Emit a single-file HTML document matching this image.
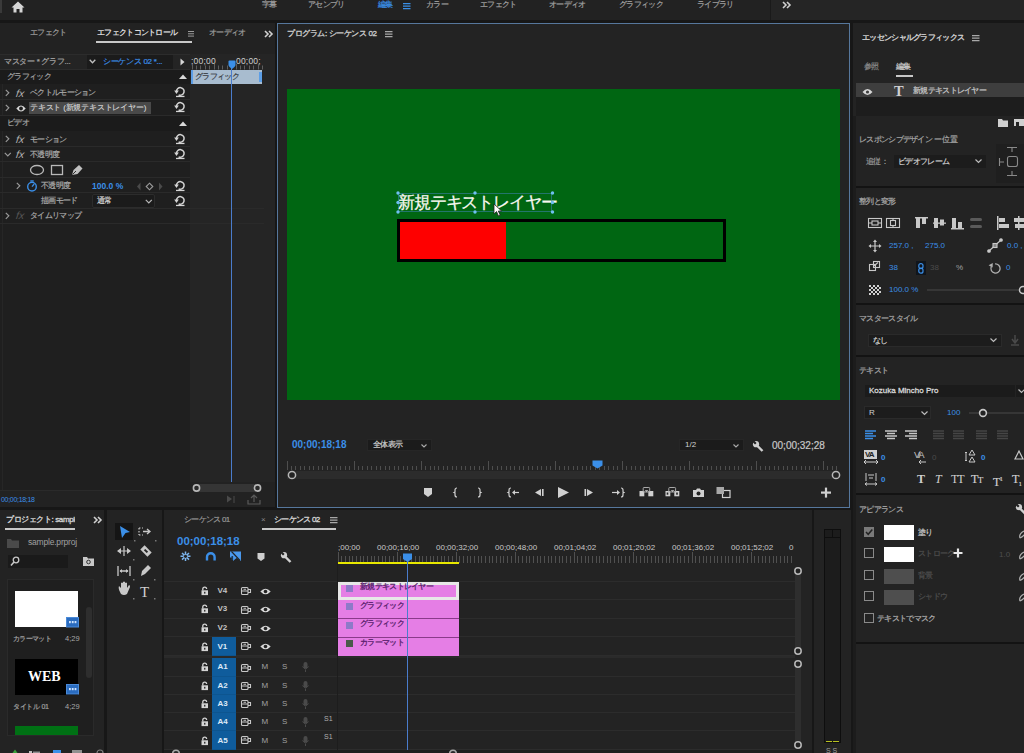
<!DOCTYPE html>
<html><head><meta charset="utf-8">
<style>
html,body{margin:0;padding:0}
body{width:1024px;height:753px;overflow:hidden;position:relative;background:#171717;font-family:"Liberation Sans",sans-serif;color:#b4b4b4;font-size:8px}
.a{position:absolute}
.t{position:absolute;white-space:nowrap;line-height:10px;height:10px;letter-spacing:-0.7px;-webkit-text-stroke:0.2px currentColor}
.n{letter-spacing:0;-webkit-text-stroke:0}
.bl{color:#3b8fe8}
svg{position:absolute;overflow:visible}
</style></head><body>
<!-- HEADER -->
<div class="a" style="left:0;top:0;width:1024px;height:20px;background:#222"></div>
<div class="a" style="left:0;top:0;width:2px;height:13px;background:#3a3a3a"></div>
<svg style="left:11px;top:1px" width="14" height="12" viewBox="0 0 14 12"><path d="M7 0.5 L13.5 6.5 L11.5 6.5 L11.5 11.5 L8.5 11.5 L8.5 8 L5.5 8 L5.5 11.5 L2.5 11.5 L2.5 6.5 L0.5 6.5 Z" fill="#d6d6d6"/></svg>
<div class="t" style="left:262px;top:0;color:#a0a0a0">字幕</div>
<div class="t" style="left:308px;top:0;color:#a0a0a0">アセンブリ</div>
<div class="t" style="left:378px;top:0;color:#3a8fe6">編集</div>
<svg style="left:403px;top:3px" width="8" height="7"><path d="M0 0.6H7.5M0 3.1H7.5M0 5.6H7.5" stroke="#3a8fe6" stroke-width="1.1"/></svg>
<div class="t" style="left:426px;top:0;color:#a0a0a0">カラー</div>
<div class="t" style="left:480px;top:0;color:#a0a0a0">エフェクト</div>
<div class="t" style="left:549px;top:0;color:#a0a0a0">オーディオ</div>
<div class="t" style="left:619px;top:0;color:#a0a0a0">グラフィック</div>
<div class="t" style="left:697px;top:0;color:#a0a0a0">ライブラリ</div>
<div class="a" style="left:771px;top:0;width:253px;height:20px;background:#252525"></div>
<div class="a" style="left:770px;top:0;width:1px;height:20px;background:#1a1a1a"></div>
<svg style="left:782px;top:1px" width="9" height="8"><path d="M1 1 L4 4 L1 7 M5 1 L8 4 L5 7" fill="none" stroke="#d0d0d0" stroke-width="1.6"/></svg>
<!-- LEFT PANEL: effect controls -->
<div class="a" style="left:0;top:23px;width:275px;height:484px;background:#222"></div>
<div class="t" style="left:30px;top:28px;color:#9c9c9c">エフェクト</div>
<div class="t" style="left:97px;top:28px;color:#dcdcdc;font-weight:bold;-webkit-text-stroke:0">エフェクトコントロール</div>
<svg style="left:188px;top:30.5px" width="7" height="7"><path d="M0 0.5H6M0 2.8H6M0 5.1H6" stroke="#9a9a9a" stroke-width="1"/></svg>
<div class="t" style="left:209px;top:28px;color:#9c9c9c">オーディオ</div>
<svg style="left:264px;top:30px" width="9" height="8"><path d="M1 1 L4 4 L1 7 M5 1 L8 4 L5 7" fill="none" stroke="#d0d0d0" stroke-width="1.6"/></svg>
<div class="a" style="left:96px;top:41px;width:96px;height:2px;background:#c8c8c8"></div>
<!-- effect list bg -->
<div class="a" style="left:0;top:54px;width:190px;height:436px;background:#1f1f1f"></div>
<div class="a" style="left:0;top:490px;width:190px;height:1px;background:#2a2a2a"></div>
<div class="a" style="left:2px;top:54px;width:1px;height:436px;background:#262626"></div>
<div class="a" style="left:190px;top:54px;width:85px;height:428px;background:#252525"></div>
<!-- master row -->
<div class="a" style="left:0;top:54px;width:190px;height:1px;background:#2c2c2c"></div>
<div class="a" style="left:0;top:55px;width:190px;height:14px;background:#242424"></div>
<div class="t" style="left:4px;top:57px;color:#a4a4a4;letter-spacing:-0.3px">マスター * グラフ...</div>
<div class="a" style="left:87px;top:55px;width:86px;height:14px;background:#1b1b1b"></div>
<svg style="left:89px;top:59px" width="7" height="5"><path d="M0.7 0.7 L3.5 3.7 L6.3 0.7" fill="none" stroke="#c0c0c0" stroke-width="1.3"/></svg>
<div class="t" style="left:103px;top:57px;color:#3b8fe8;letter-spacing:-0.3px">シーケンス 02 *...</div>
<svg style="left:180px;top:58px" width="6" height="8"><path d="M0.5 0.5 L4.5 4 L0.5 7.5Z" fill="#d8d8d8"/></svg>
<div class="a" style="left:0;top:69px;width:190px;height:1px;background:#2c2c2c"></div>
<!-- section rows -->
<div class="a" style="left:0;top:70px;width:190px;height:14px;background:#1b1b1b"></div>
<div class="t" style="left:7px;top:72px;color:#a0a0a0">グラフィック</div>
<svg style="left:179px;top:74px" width="8" height="5"><path d="M0 5 L4 0.5 L8 5Z" fill="#d8d8d8"/></svg>
<div class="a" style="left:0;top:116px;width:190px;height:15px;background:#1b1b1b"></div>
<div class="t" style="left:7px;top:118px;color:#a0a0a0">ビデオ</div>
<svg style="left:179px;top:121px" width="8" height="5"><path d="M0 5 L4 0.5 L8 5Z" fill="#d8d8d8"/></svg>
<div class="a" style="left:0;top:99px;width:190px;height:1px;background:#2a2a2a"></div>
<div class="a" style="left:0;top:115px;width:190px;height:1px;background:#2a2a2a"></div>
<div class="a" style="left:0;top:146px;width:190px;height:1px;background:#2a2a2a"></div>
<div class="a" style="left:0;top:161px;width:190px;height:1px;background:#2a2a2a"></div>
<div class="a" style="left:0;top:177px;width:190px;height:1px;background:#2a2a2a"></div>
<div class="a" style="left:0;top:192px;width:190px;height:1px;background:#2a2a2a"></div>
<div class="a" style="left:0;top:208px;width:264px;height:1px;background:#2a2a2a"></div>
<div class="a" style="left:0;top:223px;width:264px;height:1px;background:#2a2a2a"></div>
<svg style="left:5px;top:89px" width="5" height="8"><path d="M0.8 0.8 L3.8 3.8 L0.8 6.8" fill="none" stroke="#9a9a9a" stroke-width="1.2"/></svg>
<div class="t n" style="left:16px;top:88px;height:11px;line-height:11px;color:#b0b0b0;font-style:italic;font-size:10.5px;transform:skewX(-8deg)">fx</div>
<div class="t" style="left:30px;top:88px;color:#a8a8a8">ベクトルモーション</div>
<svg style="left:5px;top:104px" width="5" height="8"><path d="M0.8 0.8 L3.8 3.8 L0.8 6.8" fill="none" stroke="#9a9a9a" stroke-width="1.2"/></svg>
<svg style="left:16px;top:104px" width="10" height="9"><path d="M0.3 4.5 Q5 -1.5 9.7 4.5 Q5 10.5 0.3 4.5Z" fill="#d8d8d8"/><circle cx="5" cy="4.5" r="1.9" fill="#1f1f1f"/></svg>
<div class="a" style="left:29px;top:102px;width:122px;height:12px;background:#494949"></div>
<div class="t" style="left:30px;top:103px;color:#d8d8d8;letter-spacing:-0.2px;-webkit-text-stroke:0.1px #d8d8d8">テキスト (新規テキストレイヤー)</div>
<svg style="left:5px;top:135px" width="5" height="8"><path d="M0.8 0.8 L3.8 3.8 L0.8 6.8" fill="none" stroke="#9a9a9a" stroke-width="1.2"/></svg>
<div class="t n" style="left:16px;top:134px;height:11px;line-height:11px;color:#b0b0b0;font-style:italic;font-size:10.5px;transform:skewX(-8deg)">fx</div>
<div class="t" style="left:30px;top:135px;color:#a8a8a8">モーション</div>
<svg style="left:4px;top:152px" width="8" height="5"><path d="M0.8 0.8 L3.8 3.8 L6.8 0.8" fill="none" stroke="#9a9a9a" stroke-width="1.2"/></svg>
<div class="t n" style="left:16px;top:149px;height:11px;line-height:11px;color:#b0b0b0;font-style:italic;font-size:10.5px;transform:skewX(-8deg)">fx</div>
<div class="t" style="left:30px;top:150px;color:#a8a8a8">不透明度</div>
<svg style="left:29px;top:164px" width="56" height="12"><ellipse cx="8" cy="6" rx="6.5" ry="4.5" fill="none" stroke="#b8b8b8" stroke-width="1.3"/><rect x="22.5" y="1.5" width="11" height="9" fill="none" stroke="#b8b8b8" stroke-width="1.3"/><path d="M43 11 L44.5 6 L50 1 L53.5 4.5 L48.5 10 Z" fill="#c0c0c0"/><path d="M43.5 10.5 L47 7" stroke="#1f1f1f" stroke-width="0.9"/></svg>
<svg style="left:16px;top:182px" width="5" height="8"><path d="M0.8 0.8 L3.8 3.8 L0.8 6.8" fill="none" stroke="#9a9a9a" stroke-width="1.2"/></svg>
<svg style="left:26px;top:180px" width="12" height="12"><circle cx="6" cy="6.7" r="4.3" fill="none" stroke="#3b8fe8" stroke-width="1.4"/><path d="M6 6.7 L8.2 4" stroke="#3b8fe8" stroke-width="1.3"/><rect x="4.3" y="0.3" width="3.4" height="1.4" fill="#3b8fe8"/></svg>
<div class="t" style="left:41px;top:181px;color:#a8a8a8">不透明度</div>
<div class="t n bl" style="left:92px;top:181px;font-weight:bold;font-size:8.5px">100.0 %</div>
<svg style="left:136px;top:182px" width="28" height="9"><path d="M4.5 0.5 L1 4.5 L4.5 8.5Z" fill="#4a4a4a"/><path d="M13.5 1.2 L16.8 4.5 L13.5 7.8 L10.2 4.5Z" fill="none" stroke="#9a9a9a" stroke-width="1.1"/><path d="M23 0.5 L26.5 4.5 L23 8.5Z" fill="#4a4a4a"/></svg>
<div class="t" style="left:41px;top:196px;color:#a8a8a8">描画モード</div>
<div class="a" style="left:92px;top:194px;width:63px;height:14px;background:#1b1b1b;box-sizing:border-box;border:1px solid #2c2c2c;border-radius:2px"></div>
<div class="t" style="left:97px;top:196px;color:#d0d0d0">通常</div>
<svg style="left:145px;top:199px" width="8" height="5"><path d="M0.8 0.8 L3.8 3.8 L6.8 0.8" fill="none" stroke="#b8b8b8" stroke-width="1.2"/></svg>
<svg style="left:5px;top:212px" width="5" height="8"><path d="M0.8 0.8 L3.8 3.8 L0.8 6.8" fill="none" stroke="#9a9a9a" stroke-width="1.2"/></svg>
<div class="t n" style="left:16px;top:210px;height:11px;line-height:11px;color:#555;font-style:italic;font-size:10.5px;transform:skewX(-8deg)">fx</div>
<div class="t" style="left:30px;top:211px;color:#a8a8a8">タイムリマップ</div>
<svg style="left:174px;top:84.5px" width="13" height="13" viewBox="0 0 13 13"><path d="M2.5 6.4 A3.8 3.8 0 1 1 4.6 9.8" fill="none" stroke="#d4d4d4" stroke-width="1.5"/><path d="M0.2 5.6 L4.8 5.6 L2.5 8.9Z" fill="#d4d4d4"/><rect x="2" y="10.8" width="8.5" height="1.3" fill="#d4d4d4"/></svg>
<svg style="left:174px;top:100.0px" width="13" height="13" viewBox="0 0 13 13"><path d="M2.5 6.4 A3.8 3.8 0 1 1 4.6 9.8" fill="none" stroke="#d4d4d4" stroke-width="1.5"/><path d="M0.2 5.6 L4.8 5.6 L2.5 8.9Z" fill="#d4d4d4"/><rect x="2" y="10.8" width="8.5" height="1.3" fill="#d4d4d4"/></svg>
<svg style="left:174px;top:131.5px" width="13" height="13" viewBox="0 0 13 13"><path d="M2.5 6.4 A3.8 3.8 0 1 1 4.6 9.8" fill="none" stroke="#d4d4d4" stroke-width="1.5"/><path d="M0.2 5.6 L4.8 5.6 L2.5 8.9Z" fill="#d4d4d4"/><rect x="2" y="10.8" width="8.5" height="1.3" fill="#d4d4d4"/></svg>
<svg style="left:174px;top:147.0px" width="13" height="13" viewBox="0 0 13 13"><path d="M2.5 6.4 A3.8 3.8 0 1 1 4.6 9.8" fill="none" stroke="#d4d4d4" stroke-width="1.5"/><path d="M0.2 5.6 L4.8 5.6 L2.5 8.9Z" fill="#d4d4d4"/><rect x="2" y="10.8" width="8.5" height="1.3" fill="#d4d4d4"/></svg>
<svg style="left:174px;top:179.0px" width="13" height="13" viewBox="0 0 13 13"><path d="M2.5 6.4 A3.8 3.8 0 1 1 4.6 9.8" fill="none" stroke="#d4d4d4" stroke-width="1.5"/><path d="M0.2 5.6 L4.8 5.6 L2.5 8.9Z" fill="#d4d4d4"/><rect x="2" y="10.8" width="8.5" height="1.3" fill="#d4d4d4"/></svg>
<svg style="left:174px;top:194.0px" width="13" height="13" viewBox="0 0 13 13"><path d="M2.5 6.4 A3.8 3.8 0 1 1 4.6 9.8" fill="none" stroke="#d4d4d4" stroke-width="1.5"/><path d="M0.2 5.6 L4.8 5.6 L2.5 8.9Z" fill="#d4d4d4"/><rect x="2" y="10.8" width="8.5" height="1.3" fill="#d4d4d4"/></svg>
<div class="t n" style="left:191px;top:56px;color:#cfcfcf;font-size:8.5px;letter-spacing:0.2px">;00;00</div>
<div class="t n" style="left:236px;top:56px;color:#cfcfcf;font-size:8.5px;letter-spacing:0.2px">00;00;</div>
<svg style="left:191px;top:64px" width="72" height="6"><path d="M1.5 0V5.5M5.5 1.5V5.5M9.5 1.5V5.5M14.5 1.5V5.5M18.5 1.5V5.5M23.5 0V5.5M27.5 1.5V5.5M31.5 1.5V5.5M36.5 1.5V5.5M40.5 1.5V5.5M45.5 0V5.5M49.5 1.5V5.5M53.5 1.5V5.5M58.5 1.5V5.5M62.5 1.5V5.5M67.5 0V5.5M71.5 1.5V5.5" stroke="#5e5e5e" stroke-width="1"/></svg>
<div class="a" style="left:191px;top:70px;width:71px;height:14px;background:#a8bccf"></div>
<div class="a" style="left:191px;top:70px;width:2px;height:14px;background:#5c9ee6"></div>
<div class="a" style="left:259px;top:72px;width:3px;height:10px;background:#5c9ee6"></div>
<div class="t" style="left:195px;top:72px;color:#3a3f46">グラフィック</div>
<div class="a" style="left:231px;top:64px;width:1px;height:418px;background:#4a7ccc"></div>
<svg style="left:226.5px;top:59.5px" width="10" height="10"><path d="M1.5 1.5 Q1.5 0.5 2.5 0.5 H7.5 Q8.5 0.5 8.5 1.5 V5 Q8.5 6.5 5 9 Q1.5 6.5 1.5 5Z" fill="#3b8fe8"/></svg>
<!-- bottom bar -->
<div class="a" style="left:0;top:491px;width:275px;height:16px;background:#222"></div>
<div class="a" style="left:190px;top:482px;width:85px;height:9px;background:#222"></div>
<div class="a" style="left:198px;top:484px;width:58px;height:8px;background:#353535"></div>
<svg style="left:192px;top:483px" width="70" height="10"><circle cx="4.5" cy="5" r="3.1" fill="#2a2a2a" stroke="#b8b8b8" stroke-width="1.6"/><circle cx="65.5" cy="5" r="3.1" fill="#2a2a2a" stroke="#b8b8b8" stroke-width="1.6"/></svg>
<div class="t n" style="left:1px;top:495px;color:#3b8fe8;font-size:7px;letter-spacing:-0.3px">00;00;18;18</div>
<svg style="left:226px;top:494px" width="36" height="11"><path d="M1 1.5 L6 5 L1 8.5Z" fill="#4a4a4a"/><path d="M8 2 V9" stroke="#4a4a4a"/><path d="M22 6 V10 H34 V6" fill="none" stroke="#5a5a5a" stroke-width="1.2"/><path d="M28 8 V2 M25 4 L28 1 L31 4" fill="none" stroke="#5a5a5a" stroke-width="1.2"/></svg>
<!-- PROGRAM MONITOR -->
<div class="a" style="left:277px;top:23px;width:573px;height:485px;background:#232323;box-sizing:border-box;border:1px solid #56779c"></div>
<div class="t" style="left:287px;top:29px;color:#c8c8c8;letter-spacing:-0.4px;-webkit-text-stroke:0.35px #c8c8c8">プログラム: シーケンス 02</div>
<svg style="left:385px;top:31px" width="8" height="7"><path d="M0 0.6H7.5M0 3.1H7.5M0 5.6H7.5" stroke="#a8a8a8" stroke-width="1.1"/></svg>
<div class="a" style="left:287px;top:89px;width:553px;height:311px;background:#006612"></div>
<!-- title text -->
<div class="t" style="left:398px;top:193px;height:19px;line-height:19px;color:#f8f8f0;font-family:'Liberation Serif',serif;font-size:16.5px;letter-spacing:-1.15px;-webkit-text-stroke:0.25px #f8f8f0">新規テキストレイヤー</div>
<div class="a" style="left:398px;top:193px;width:154px;height:19px;box-sizing:border-box;border:1px solid #3a7fa8;opacity:0.6"></div>
<svg style="left:395px;top:190px" width="161" height="25"><g fill="#6fc0f0">
<circle cx="3" cy="3" r="1.7"/><circle cx="80" cy="3" r="1.7"/><circle cx="157.5" cy="3" r="1.7"/>
<circle cx="3" cy="12.5" r="1.7"/><circle cx="157.5" cy="12.5" r="1.7"/>
<circle cx="3" cy="22" r="1.7"/><circle cx="80" cy="22" r="1.7"/><circle cx="157.5" cy="22" r="1.7"/></g></svg>
<!-- bar -->
<div class="a" style="left:397px;top:219px;width:329px;height:43px;box-sizing:border-box;border:3px solid #000"></div>
<div class="a" style="left:400px;top:222px;width:106px;height:37px;background:#fe0000"></div>
<!-- cursor -->
<svg style="left:493px;top:203px" width="10" height="14"><path d="M1 1 L1 11 L3.5 8.5 L5.5 13 L7.2 12.2 L5.3 8 L8.6 8 Z" fill="#fff" stroke="#222" stroke-width="0.8"/></svg>
<!-- controls -->
<div class="t bl n" style="left:292px;top:440px;font-weight:bold;font-size:10px;color:#3b8fe8">00;00;18;18</div>
<div class="a" style="left:368px;top:440px;width:63px;height:10px;background:#1b1b1b;box-shadow:0 0 0 1px #262626"></div>
<div class="t" style="left:373px;top:440px;color:#d0d0d0;font-size:8px">全体表示</div>
<svg style="left:421px;top:443.5px" width="6" height="4"><path d="M0.5 0.5 L3 3 L5.5 0.5" fill="none" stroke="#aaa" stroke-width="1.1"/></svg>
<div class="a" style="left:680px;top:440px;width:63px;height:10px;background:#1b1b1b;box-shadow:0 0 0 1px #262626"></div>
<div class="t n" style="left:685px;top:440px;color:#d0d0d0;font-size:8px">1/2</div>
<svg style="left:733px;top:443.5px" width="6" height="4"><path d="M0.5 0.5 L3 3 L5.5 0.5" fill="none" stroke="#aaa" stroke-width="1.1"/></svg>
<svg style="left:752px;top:440px" width="12" height="12"><path d="M10.5 11 L5.5 6" stroke="#d0d0d0" stroke-width="2.4"/><circle cx="4" cy="4.2" r="3.1" fill="#d0d0d0"/><path d="M3.8 3.8 L0.5 0.5" stroke="#232323" stroke-width="2.2"/></svg>
<div class="t n" style="left:772px;top:441px;color:#c8c8c8;font-size:10px;-webkit-text-stroke:0.2px #c8c8c8">00;00;32;28</div>
<!-- ruler -->
<div class="a" style="left:287px;top:471px;width:551px;height:8px;background:#2c2c2c"></div>
<svg style="left:285px;top:459px" width="556" height="12"><path d="M2.5 2V11M6.5 7V11M10.5 7V11M15.5 7V11M19.5 7V11M24.5 7V11M28.5 7V11M33.5 7V11M37.5 7V11M42.5 7V11M46.5 7V11M51.5 7V11M55.5 7V11M60.5 7V11M64.5 7V11M69.5 2V11M73.5 7V11M77.5 7V11M82.5 7V11M86.5 7V11M91.5 7V11M95.5 7V11M100.5 7V11M104.5 7V11M109.5 7V11M113.5 7V11M118.5 7V11M122.5 7V11M127.5 7V11M131.5 7V11M136.5 2V11M140.5 7V11M145.5 7V11M149.5 7V11M153.5 7V11M158.5 7V11M162.5 7V11M167.5 7V11M171.5 7V11M176.5 7V11M180.5 7V11M185.5 7V11M189.5 7V11M194.5 7V11M198.5 7V11M203.5 2V11M207.5 7V11M212.5 7V11M216.5 7V11M221.5 7V11M225.5 7V11M229.5 7V11M234.5 7V11M238.5 7V11M243.5 7V11M247.5 7V11M252.5 7V11M256.5 7V11M261.5 7V11M265.5 7V11M270.5 2V11M274.5 7V11M279.5 7V11M283.5 7V11M288.5 7V11M292.5 7V11M297.5 7V11M301.5 7V11M305.5 7V11M310.5 7V11M314.5 7V11M319.5 7V11M323.5 7V11M328.5 7V11M332.5 7V11M337.5 2V11M341.5 7V11M346.5 7V11M350.5 7V11M355.5 7V11M359.5 7V11M364.5 7V11M368.5 7V11M373.5 7V11M377.5 7V11M381.5 7V11M386.5 7V11M390.5 7V11M395.5 7V11M399.5 7V11M404.5 2V11M408.5 7V11M413.5 7V11M417.5 7V11M422.5 7V11M426.5 7V11M431.5 7V11M435.5 7V11M440.5 7V11M444.5 7V11M449.5 7V11M453.5 7V11M457.5 7V11M462.5 7V11M466.5 7V11M471.5 2V11M475.5 7V11M480.5 7V11M484.5 7V11M489.5 7V11M493.5 7V11M498.5 7V11M502.5 7V11M507.5 7V11M511.5 7V11M516.5 7V11M520.5 7V11M524.5 7V11M529.5 7V11M533.5 7V11M538.5 2V11M542.5 7V11M547.5 7V11M551.5 7V11" stroke="#4e4e4e" stroke-width="1"/></svg>
<svg style="left:286px;top:469px" width="556" height="12"><circle cx="6" cy="6" r="3.6" fill="#232323" stroke="#b8b8b8" stroke-width="1.5"/><circle cx="550" cy="6" r="3.6" fill="#232323" stroke="#b8b8b8" stroke-width="1.5"/></svg>
<svg style="left:592px;top:460px" width="11" height="9"><path d="M0.5 0.5 H10.5 V5.5 L5.5 8.5 L0.5 5.5Z" fill="#3b8fe8"/></svg>
<!-- transport -->
<svg style="left:0;top:0" width="1024" height="753">
<g fill="#d0d0d0" stroke="none">
<path d="M424 488 H432 V494 L428 497 L424 494Z"/>
<rect x="639.5" y="491" width="4.8" height="5.3"/><rect x="648.3" y="491" width="5" height="5.3"/><rect x="665.5" y="491" width="4.8" height="5.3"/><rect x="674.3" y="491" width="5" height="5.3"/><path d="M644.8 490.2 L648.3 490.2 L646.5 492.3Z"/><path d="M670.8 490.2 L674.3 490.2 L672.5 492.3Z"/>
<path d="M693 490 h3 l1 -1.5 h3 l1 1.5 h3 v7 h-11z"/>
<path d="M558 487 L569 492.5 L558 498Z"/>
<path d="M535 492.5 L541 489 V496Z"/><rect x="542" y="489" width="1.6" height="7"/>
<path d="M593 492.5 L587 489 V496Z"/><rect x="584.5" y="489" width="1.6" height="7"/>
<rect x="821" y="491.5" width="10" height="2.2"/><rect x="824.9" y="487.6" width="2.2" height="10"/>
</g>
<g fill="none" stroke="#d0d0d0" stroke-width="1.2">
<path d="M457 488 Q455 488 455 490 V492 L454 492.5 L455 493 V495 Q455 497 457 497"/>
<path d="M478 488 Q480 488 480 490 V492 L481 492.5 L480 493 V495 Q480 497 478 497"/>
<path d="M511 488 Q509 488 509 490 V492 L508 492.5 L509 493 V495 Q509 497 511 497"/>
<path d="M513 492.5 H519"/>
<path d="M621 488 Q623 488 623 490 V492 L624 492.5 L623 493 V495 Q623 497 621 497"/>
<path d="M612 492.5 H618"/>
<rect x="722.5" y="490.5" width="7.5" height="7"/>
</g>
<g fill="#d0d0d0"><path d="M512 492.5 L515 490 V495Z"/><path d="M620 492.5 L617 490 V495Z"/></g>
<circle cx="698.5" cy="493.5" r="2" fill="#232323"/>
<rect x="716.5" y="487" width="7.5" height="7" fill="#a8a8a8"/>
<g fill="none" stroke="#a8a8a8" stroke-width="1"><rect x="643.2" y="487.5" width="6.5" height="4.5" rx="0.8"/><rect x="668.8" y="487.5" width="6.8" height="4.5" rx="0.8"/></g><rect x="666.7" y="492.5" width="1.6" height="2.2" fill="#232323"/><rect x="676.2" y="492.5" width="1.6" height="2.2" fill="#232323"/>
</svg>
<!-- PROJECT -->
<div class="a" style="left:0;top:510px;width:104px;height:243px;background:#232323"></div>
<div class="t" style="left:6px;top:515px;color:#d0d0d0;-webkit-text-stroke:0.35px #d0d0d0;letter-spacing:-0.4px;width:69px;overflow:hidden">プロジェクト: sample</div>
<div class="a" style="left:5px;top:528px;width:70px;height:2px;background:#c8c8c8"></div>
<svg style="left:93px;top:516px" width="9" height="8"><path d="M1 1 L4 4 L1 7 M5 1 L8 4 L5 7" fill="none" stroke="#d0d0d0" stroke-width="1.6"/></svg>
<svg style="left:7px;top:538px" width="12" height="10"><path d="M0 1 H4 L5 2.5 H12 V10 H0Z" fill="#4a4a4a"/></svg>
<div class="t n" style="left:28px;top:537px;color:#a0a0a0;font-size:8.5px;letter-spacing:-0.2px">sample.prproj</div>
<div class="a" style="left:8px;top:555px;width:60px;height:13px;background:#1a1a1a"></div>
<svg style="left:10px;top:556px" width="10" height="11"><circle cx="6" cy="4" r="2.8" fill="none" stroke="#c8c8c8" stroke-width="1.3"/><path d="M4 6 L1 9.5" stroke="#c8c8c8" stroke-width="1.6"/></svg>
<svg style="left:83px;top:557px" width="11" height="9"><path d="M0 0 H4 L5 1.5 H11 V9 H0Z" fill="#c8c8c8"/><circle cx="5.5" cy="5" r="1.8" fill="none" stroke="#333" stroke-width="1"/></svg>
<div class="a" style="left:7px;top:579px;width:87px;height:157px;background:#1f1f1f;box-sizing:border-box;border:1px solid #2a2a2a"></div>
<div class="a" style="left:15px;top:591px;width:63px;height:36px;background:#fff"></div>
<svg style="left:65.5px;top:616.5px" width="13" height="10"><rect x="0.5" y="0.5" width="12" height="9.5" fill="#2a6cc0" stroke="#4a8ad8" stroke-width="1"/><g fill="#cfe4ff"><rect x="3" y="4" width="1.8" height="2.2"/><rect x="5.8" y="4" width="1.8" height="2.2"/><rect x="8.6" y="4" width="1.8" height="2.2"/></g></svg>
<div class="t" style="left:13px;top:634px;color:#a0a0a0;font-size:7px">カラーマット</div>
<div class="t n" style="left:65px;top:634px;color:#a8a8a8;font-size:7.5px">4;29</div>
<div class="a" style="left:15px;top:659px;width:63px;height:36px;background:#000"></div>
<div class="t n" style="left:28px;top:669px;color:#fff;font-family:'Liberation Serif',serif;font-size:14px;font-weight:bold;height:16px;line-height:16px">WEB</div>
<svg style="left:65.5px;top:684px" width="13" height="10"><rect x="0.5" y="0.5" width="12" height="9.5" fill="#2a6cc0" stroke="#4a8ad8" stroke-width="1"/><g fill="#cfe4ff"><rect x="3" y="4" width="1.8" height="2.2"/><rect x="5.8" y="4" width="1.8" height="2.2"/><rect x="8.6" y="4" width="1.8" height="2.2"/></g></svg>
<div class="t" style="left:13px;top:702px;color:#a0a0a0;font-size:7px;letter-spacing:-0.3px">タイトル 01</div>
<div class="t n" style="left:65px;top:702px;color:#a8a8a8;font-size:7.5px">4;29</div>
<div class="a" style="left:15px;top:726px;width:63px;height:9px;background:#007014"></div>
<div class="a" style="left:86px;top:607px;width:6px;height:71px;background:#2e2e2e;border-radius:3px"></div>
<svg style="left:0;top:745px" width="104" height="8"><path d="M12.5 8 L15 4.5 L17.5 8Z" fill="#3aa03a"/><rect x="29" y="6" width="3" height="2" fill="#c0c0c0"/><rect x="33" y="6.5" width="7" height="1.5" fill="#909090"/><rect x="53" y="5" width="8" height="3" fill="#3b8fe8"/><rect x="72" y="5" width="10" height="3" fill="#909090"/><path d="M97 8 A3 3 0 0 1 103 8" fill="none" stroke="#808080" stroke-width="1.2"/></svg>
<!-- TOOLS -->
<div class="a" style="left:107px;top:510px;width:55px;height:243px;background:#232323"></div>
<div class="a" style="left:115px;top:523px;width:18px;height:17px;background:#151515"></div>
<svg style="left:0;top:0" width="170" height="753">
<path d="M120 526 L130 532 L125.5 533 L122 538Z" fill="#3b8fe8"/>
<g fill="none" stroke="#c8c8c8" stroke-width="1.2" stroke-dasharray="1.5 1.5"><path d="M139 528 V535 M139 528 H143 M139 535 H143"/></g>
<path d="M143 531.5 H149 M147 529 L150 531.5 L147 534" fill="none" stroke="#c8c8c8" stroke-width="1.3"/>
<path d="M124 546 V556 M118 551 H130" stroke="#c8c8c8" stroke-width="1.2"/><path d="M117 551 L121 548 V554Z M131 551 L127 548 V554Z" fill="#c8c8c8"/>
<g transform="rotate(45 146 551)"><rect x="141" y="548" width="10" height="6" fill="#c8c8c8"/><rect x="144" y="550" width="4" height="2" fill="#232323"/></g>
<path d="M118 566 V576 M130 566 V576 M120 571 H128" stroke="#c8c8c8" stroke-width="1.3"/><path d="M119.5 571 L122 569 V573Z M128.5 571 L126 569 V573Z" fill="#c8c8c8"/>
<path d="M141 576 L142 571 L148 565 L151 568 L145 574Z" fill="#c8c8c8"/>
<path d="M120 592 Q118 588 119 586 L121 588 V583 Q122 582 123 583 V587 V582 Q124 581 125 582 V587 V583 Q126 582 127 583 V588 L129 585 Q130 585 130 587 L127 594 Q124 596 121 594Z" fill="#c8c8c8"/>
<text x="140" y="597" font-family="Liberation Serif" font-size="15" fill="#d0d0d0">T</text>
<g fill="#777"><rect x="134" y="540" width="1.5" height="1.5"/><rect x="155" y="540" width="1.5" height="1.5"/><rect x="133" y="559" width="1.5" height="1.5"/><rect x="133" y="579" width="1.5" height="1.5"/><rect x="154" y="579" width="1.5" height="1.5"/><rect x="133" y="598" width="1.5" height="1.5"/><rect x="154" y="598" width="1.5" height="1.5"/></g>
</svg>
<!-- TIMELINE -->
<div class="a" style="left:164px;top:510px;width:648px;height:243px;background:#232323"></div>
<div class="t" style="left:184px;top:515px;color:#9a9a9a">シーケンス 01</div>
<div class="t n" style="left:261px;top:515px;color:#888;font-size:8px">×</div>
<div class="t" style="left:274px;top:515px;color:#d0d0d0;-webkit-text-stroke:0.35px #d0d0d0">シーケンス 02</div>
<svg style="left:330px;top:517px" width="8" height="7"><path d="M0 0.6H7.5M0 3.1H7.5M0 5.6H7.5" stroke="#a8a8a8" stroke-width="1.1"/></svg>
<div class="a" style="left:262px;top:528px;width:74px;height:2px;background:#c8c8c8"></div>
<div class="t n bl" style="left:177px;top:535px;font-size:11.5px;height:12px;line-height:12px;font-weight:bold;letter-spacing:0px">00;00;18;18</div>
<svg style="left:0;top:0" width="340" height="600">
<g stroke="#7db6ee" stroke-width="1.5" fill="none"><path d="M185.5 551.5 V561 M180.5 556.3 H190.5 M182 553 L189 559.6 M189 553 L182 559.6"/></g><circle cx="185.5" cy="556.3" r="1.6" fill="#232323"/>
<path d="M207 560.5 V557 A3.8 3.8 0 0 1 214.6 557 V560.5" fill="none" stroke="#3b8fe8" stroke-width="2.4"/>
<path d="M230 551.5 H241 V561 L236.5 558 L233 561 V557.5 H230Z" fill="#4a98ec"/><path d="M231.5 551.5 L240 560.5" stroke="#232323" stroke-width="1.1"/><rect x="231.5" y="556" width="1.6" height="4" fill="#1a3a5a"/>
<path d="M257.5 553 H264.5 V558.5 L261 561 L257.5 558.5Z" fill="#cfcfcf"/>
<g transform="translate(280,551)"><path d="M10.5 11 L5.5 6" stroke="#d0d0d0" stroke-width="2.4"/><circle cx="4" cy="4.2" r="3.1" fill="#d0d0d0"/><path d="M3.8 3.8 L0.5 0.5" stroke="#232323" stroke-width="2.2"/></g>
</svg>
<!-- ruler -->
<div class="t n" style="left:338px;top:543px;color:#c8c8c8;font-size:8px">;00;00</div>
<div class="t n" style="left:377px;top:543px;color:#c8c8c8;font-size:8px">00;00;16;00</div>
<div class="t n" style="left:436px;top:543px;color:#c8c8c8;font-size:8px">00;00;32;00</div>
<div class="t n" style="left:495px;top:543px;color:#c8c8c8;font-size:8px">00;00;48;00</div>
<div class="t n" style="left:554px;top:543px;color:#c8c8c8;font-size:8px">00;01;04;02</div>
<div class="t n" style="left:613px;top:543px;color:#c8c8c8;font-size:8px">00;01;20;02</div>
<div class="t n" style="left:672px;top:543px;color:#c8c8c8;font-size:8px">00;01;36;02</div>
<div class="t n" style="left:731px;top:543px;color:#c8c8c8;font-size:8px">00;01;52;02</div>
<div class="t n" style="left:789px;top:543px;color:#c8c8c8;font-size:8px">0</div>
<svg style="left:336px;top:552px" width="460" height="12"><path d="M2.5 0V11M5.5 4V11M9.5 4V11M13.5 4V11M16.5 4V11M20.5 4V11M24.5 4V11M27.5 4V11M31.5 4V11M35.5 4V11M38.5 4V11M42.5 4V11M46.5 4V11M49.5 4V11M53.5 4V11M57.5 4V11M61.5 0V11M64.5 4V11M68.5 4V11M72.5 4V11M75.5 4V11M79.5 4V11M83.5 4V11M86.5 4V11M90.5 4V11M94.5 4V11M97.5 4V11M101.5 4V11M105.5 4V11M108.5 4V11M112.5 4V11M116.5 4V11M120.5 0V11M123.5 4V11M127.5 4V11M131.5 4V11M134.5 4V11M138.5 4V11M142.5 4V11M145.5 4V11M149.5 4V11M153.5 4V11M156.5 4V11M160.5 4V11M164.5 4V11M167.5 4V11M171.5 4V11M175.5 4V11M179.5 0V11M182.5 4V11M186.5 4V11M190.5 4V11M193.5 4V11M197.5 4V11M201.5 4V11M204.5 4V11M208.5 4V11M212.5 4V11M215.5 4V11M219.5 4V11M223.5 4V11M226.5 4V11M230.5 4V11M234.5 4V11M238.5 0V11M241.5 4V11M245.5 4V11M249.5 4V11M252.5 4V11M256.5 4V11M260.5 4V11M263.5 4V11M267.5 4V11M271.5 4V11M274.5 4V11M278.5 4V11M282.5 4V11M285.5 4V11M289.5 4V11M293.5 4V11M297.5 0V11M300.5 4V11M304.5 4V11M308.5 4V11M311.5 4V11M315.5 4V11M319.5 4V11M322.5 4V11M326.5 4V11M330.5 4V11M333.5 4V11M337.5 4V11M341.5 4V11M344.5 4V11M348.5 4V11M352.5 4V11M356.5 0V11M359.5 4V11M363.5 4V11M367.5 4V11M370.5 4V11M374.5 4V11M378.5 4V11M381.5 4V11M385.5 4V11M389.5 4V11M392.5 4V11M396.5 4V11M400.5 4V11M403.5 4V11M407.5 4V11M411.5 4V11M415.5 0V11M418.5 4V11M422.5 4V11M426.5 4V11M429.5 4V11M433.5 4V11M437.5 4V11M440.5 4V11M444.5 4V11M448.5 4V11M451.5 4V11M455.5 4V11" stroke="#505050" stroke-width="1"/></svg>
<div class="a" style="left:338px;top:562px;width:121px;height:2px;background:#e8e800"></div>
<!-- track header lines -->
<div class="a" style="left:164px;top:581px;width:631px;height:1px;background:#2c2c2c"></div>
<div class="a" style="left:212px;top:637px;width:24px;height:19px;background:#0f5c9c"></div>
<div class="a" style="left:212px;top:658px;width:24px;height:95px;background:#0f5c9c"></div>
<div class="a" style="left:164px;top:599px;width:631px;height:1px;background:#2c2c2c"></div>
<div class="t n" style="left:217.5px;top:586px;color:#c4c4c4;font-size:8px;font-weight:bold">V4</div>
<svg style="left:201px;top:586px" width="8" height="10"><path d="M1.8 4.5 V3 A1.9 1.9 0 0 1 5.6 3" fill="none" stroke="#d4d4d4" stroke-width="1.3"/><rect x="0.5" y="4.3" width="6.5" height="4.8" fill="#d4d4d4"/><rect x="3.1" y="5.8" width="1.3" height="1.8" fill="#232323"/></svg>
<svg style="left:241px;top:587px" width="10" height="8"><g fill="none" stroke="#c8c8c8" stroke-width="1.1"><rect x="0.5" y="0.5" width="6.5" height="7" rx="1"/><path d="M0.5 4 H7 M2.5 2.2 H5 M7 2.5 H9.5 V5.5 H7"/></g></svg>
<svg style="left:260px;top:587.5px" width="11" height="8"><path d="M0.3 3.5 Q5.5 -2.2 10.7 3.5 Q5.5 9.2 0.3 3.5Z" fill="#d8d8d8"/><circle cx="5.5" cy="3.5" r="1.8" fill="#232323"/></svg>
<div class="a" style="left:164px;top:618px;width:631px;height:1px;background:#2c2c2c"></div>
<div class="t n" style="left:217.5px;top:604px;color:#c4c4c4;font-size:8px;font-weight:bold">V3</div>
<svg style="left:201px;top:604px" width="8" height="10"><path d="M1.8 4.5 V3 A1.9 1.9 0 0 1 5.6 3" fill="none" stroke="#d4d4d4" stroke-width="1.3"/><rect x="0.5" y="4.3" width="6.5" height="4.8" fill="#d4d4d4"/><rect x="3.1" y="5.8" width="1.3" height="1.8" fill="#232323"/></svg>
<svg style="left:241px;top:606px" width="10" height="8"><g fill="none" stroke="#c8c8c8" stroke-width="1.1"><rect x="0.5" y="0.5" width="6.5" height="7" rx="1"/><path d="M0.5 4 H7 M2.5 2.2 H5 M7 2.5 H9.5 V5.5 H7"/></g></svg>
<svg style="left:260px;top:606.0px" width="11" height="8"><path d="M0.3 3.5 Q5.5 -2.2 10.7 3.5 Q5.5 9.2 0.3 3.5Z" fill="#d8d8d8"/><circle cx="5.5" cy="3.5" r="1.8" fill="#232323"/></svg>
<div class="a" style="left:164px;top:636px;width:631px;height:1px;background:#2c2c2c"></div>
<div class="t n" style="left:217.5px;top:623px;color:#c4c4c4;font-size:8px;font-weight:bold">V2</div>
<svg style="left:201px;top:623px" width="8" height="10"><path d="M1.8 4.5 V3 A1.9 1.9 0 0 1 5.6 3" fill="none" stroke="#d4d4d4" stroke-width="1.3"/><rect x="0.5" y="4.3" width="6.5" height="4.8" fill="#d4d4d4"/><rect x="3.1" y="5.8" width="1.3" height="1.8" fill="#232323"/></svg>
<svg style="left:241px;top:624px" width="10" height="8"><g fill="none" stroke="#c8c8c8" stroke-width="1.1"><rect x="0.5" y="0.5" width="6.5" height="7" rx="1"/><path d="M0.5 4 H7 M2.5 2.2 H5 M7 2.5 H9.5 V5.5 H7"/></g></svg>
<svg style="left:260px;top:624.5px" width="11" height="8"><path d="M0.3 3.5 Q5.5 -2.2 10.7 3.5 Q5.5 9.2 0.3 3.5Z" fill="#d8d8d8"/><circle cx="5.5" cy="3.5" r="1.8" fill="#232323"/></svg>
<div class="a" style="left:164px;top:655px;width:631px;height:1px;background:#2c2c2c"></div>
<div class="a" style="left:212px;top:655px;width:24px;height:1px;background:#0d5590"></div>
<div class="t n" style="left:217.5px;top:642px;color:#dde9f6;font-size:8px;font-weight:bold">V1</div>
<svg style="left:201px;top:642px" width="8" height="10"><path d="M1.8 4.5 V3 A1.9 1.9 0 0 1 5.6 3" fill="none" stroke="#d4d4d4" stroke-width="1.3"/><rect x="0.5" y="4.3" width="6.5" height="4.8" fill="#d4d4d4"/><rect x="3.1" y="5.8" width="1.3" height="1.8" fill="#232323"/></svg>
<svg style="left:241px;top:642px" width="10" height="8"><g fill="none" stroke="#c8c8c8" stroke-width="1.1"><rect x="0.5" y="0.5" width="6.5" height="7" rx="1"/><path d="M0.5 4 H7 M2.5 2.2 H5 M7 2.5 H9.5 V5.5 H7"/></g></svg>
<svg style="left:260px;top:643.0px" width="11" height="8"><path d="M0.3 3.5 Q5.5 -2.2 10.7 3.5 Q5.5 9.2 0.3 3.5Z" fill="#d8d8d8"/><circle cx="5.5" cy="3.5" r="1.8" fill="#232323"/></svg>
<div class="a" style="left:164px;top:676px;width:631px;height:1px;background:#2c2c2c"></div>
<div class="a" style="left:212px;top:676px;width:24px;height:1px;background:#0d5590"></div>
<div class="t n" style="left:217.5px;top:662px;color:#dde9f6;font-size:8px;font-weight:bold">A1</div>
<svg style="left:201px;top:662px" width="8" height="10"><path d="M1.8 4.5 V3 A1.9 1.9 0 0 1 5.6 3" fill="none" stroke="#d4d4d4" stroke-width="1.3"/><rect x="0.5" y="4.3" width="6.5" height="4.8" fill="#d4d4d4"/><rect x="3.1" y="5.8" width="1.3" height="1.8" fill="#232323"/></svg>
<svg style="left:241px;top:664px" width="10" height="8"><g fill="none" stroke="#c8c8c8" stroke-width="1.1"><rect x="0.5" y="0.5" width="6.5" height="7" rx="1"/><path d="M0.5 4 H7 M2.5 2.2 H5 M7 2.5 H9.5 V5.5 H7"/></g></svg>
<div class="t n" style="left:261.5px;top:662px;color:#a0a0a0;font-size:8px">M</div>
<div class="t n" style="left:282px;top:662px;color:#a0a0a0;font-size:8px">S</div>
<svg style="left:302px;top:662px" width="7" height="10"><rect x="1.5" y="0" width="4" height="6.5" rx="2" fill="#4a4a4a"/><path d="M0.5 4.5 Q3.5 9 6.5 4.5 M3.5 7.5 V10" fill="none" stroke="#4a4a4a" stroke-width="1"/></svg>
<div class="a" style="left:164px;top:694px;width:631px;height:1px;background:#2c2c2c"></div>
<div class="a" style="left:212px;top:694px;width:24px;height:1px;background:#0d5590"></div>
<div class="t n" style="left:217.5px;top:681px;color:#dde9f6;font-size:8px;font-weight:bold">A2</div>
<svg style="left:201px;top:681px" width="8" height="10"><path d="M1.8 4.5 V3 A1.9 1.9 0 0 1 5.6 3" fill="none" stroke="#d4d4d4" stroke-width="1.3"/><rect x="0.5" y="4.3" width="6.5" height="4.8" fill="#d4d4d4"/><rect x="3.1" y="5.8" width="1.3" height="1.8" fill="#232323"/></svg>
<svg style="left:241px;top:682px" width="10" height="8"><g fill="none" stroke="#c8c8c8" stroke-width="1.1"><rect x="0.5" y="0.5" width="6.5" height="7" rx="1"/><path d="M0.5 4 H7 M2.5 2.2 H5 M7 2.5 H9.5 V5.5 H7"/></g></svg>
<div class="t n" style="left:261.5px;top:681px;color:#a0a0a0;font-size:8px">M</div>
<div class="t n" style="left:282px;top:681px;color:#a0a0a0;font-size:8px">S</div>
<svg style="left:302px;top:681px" width="7" height="10"><rect x="1.5" y="0" width="4" height="6.5" rx="2" fill="#4a4a4a"/><path d="M0.5 4.5 Q3.5 9 6.5 4.5 M3.5 7.5 V10" fill="none" stroke="#4a4a4a" stroke-width="1"/></svg>
<div class="a" style="left:164px;top:712px;width:631px;height:1px;background:#2c2c2c"></div>
<div class="a" style="left:212px;top:712px;width:24px;height:1px;background:#0d5590"></div>
<div class="t n" style="left:217.5px;top:699px;color:#dde9f6;font-size:8px;font-weight:bold">A3</div>
<svg style="left:201px;top:699px" width="8" height="10"><path d="M1.8 4.5 V3 A1.9 1.9 0 0 1 5.6 3" fill="none" stroke="#d4d4d4" stroke-width="1.3"/><rect x="0.5" y="4.3" width="6.5" height="4.8" fill="#d4d4d4"/><rect x="3.1" y="5.8" width="1.3" height="1.8" fill="#232323"/></svg>
<svg style="left:241px;top:700px" width="10" height="8"><g fill="none" stroke="#c8c8c8" stroke-width="1.1"><rect x="0.5" y="0.5" width="6.5" height="7" rx="1"/><path d="M0.5 4 H7 M2.5 2.2 H5 M7 2.5 H9.5 V5.5 H7"/></g></svg>
<div class="t n" style="left:261.5px;top:699px;color:#a0a0a0;font-size:8px">M</div>
<div class="t n" style="left:282px;top:699px;color:#a0a0a0;font-size:8px">S</div>
<svg style="left:302px;top:699px" width="7" height="10"><rect x="1.5" y="0" width="4" height="6.5" rx="2" fill="#4a4a4a"/><path d="M0.5 4.5 Q3.5 9 6.5 4.5 M3.5 7.5 V10" fill="none" stroke="#4a4a4a" stroke-width="1"/></svg>
<div class="a" style="left:164px;top:730px;width:631px;height:1px;background:#2c2c2c"></div>
<div class="a" style="left:212px;top:730px;width:24px;height:1px;background:#0d5590"></div>
<div class="t n" style="left:217.5px;top:717px;color:#dde9f6;font-size:8px;font-weight:bold">A4</div>
<svg style="left:201px;top:717px" width="8" height="10"><path d="M1.8 4.5 V3 A1.9 1.9 0 0 1 5.6 3" fill="none" stroke="#d4d4d4" stroke-width="1.3"/><rect x="0.5" y="4.3" width="6.5" height="4.8" fill="#d4d4d4"/><rect x="3.1" y="5.8" width="1.3" height="1.8" fill="#232323"/></svg>
<svg style="left:241px;top:718px" width="10" height="8"><g fill="none" stroke="#c8c8c8" stroke-width="1.1"><rect x="0.5" y="0.5" width="6.5" height="7" rx="1"/><path d="M0.5 4 H7 M2.5 2.2 H5 M7 2.5 H9.5 V5.5 H7"/></g></svg>
<div class="t n" style="left:261.5px;top:717px;color:#a0a0a0;font-size:8px">M</div>
<div class="t n" style="left:282px;top:717px;color:#a0a0a0;font-size:8px">S</div>
<svg style="left:302px;top:717px" width="7" height="10"><rect x="1.5" y="0" width="4" height="6.5" rx="2" fill="#4a4a4a"/><path d="M0.5 4.5 Q3.5 9 6.5 4.5 M3.5 7.5 V10" fill="none" stroke="#4a4a4a" stroke-width="1"/></svg>
<div class="t n" style="left:324px;top:714px;color:#b0b0b0;font-size:7px">S1</div>
<div class="a" style="left:164px;top:749px;width:631px;height:1px;background:#2c2c2c"></div>
<div class="a" style="left:212px;top:749px;width:24px;height:1px;background:#0d5590"></div>
<div class="t n" style="left:217.5px;top:736px;color:#dde9f6;font-size:8px;font-weight:bold">A5</div>
<svg style="left:201px;top:736px" width="8" height="10"><path d="M1.8 4.5 V3 A1.9 1.9 0 0 1 5.6 3" fill="none" stroke="#d4d4d4" stroke-width="1.3"/><rect x="0.5" y="4.3" width="6.5" height="4.8" fill="#d4d4d4"/><rect x="3.1" y="5.8" width="1.3" height="1.8" fill="#232323"/></svg>
<svg style="left:241px;top:736px" width="10" height="8"><g fill="none" stroke="#c8c8c8" stroke-width="1.1"><rect x="0.5" y="0.5" width="6.5" height="7" rx="1"/><path d="M0.5 4 H7 M2.5 2.2 H5 M7 2.5 H9.5 V5.5 H7"/></g></svg>
<div class="t n" style="left:261.5px;top:736px;color:#a0a0a0;font-size:8px">M</div>
<div class="t n" style="left:282px;top:736px;color:#a0a0a0;font-size:8px">S</div>
<svg style="left:302px;top:736px" width="7" height="10"><rect x="1.5" y="0" width="4" height="6.5" rx="2" fill="#4a4a4a"/><path d="M0.5 4.5 Q3.5 9 6.5 4.5 M3.5 7.5 V10" fill="none" stroke="#4a4a4a" stroke-width="1"/></svg>
<div class="t n" style="left:324px;top:732px;color:#b0b0b0;font-size:7px">S1</div>
<div class="a" style="left:164px;top:656px;width:631px;height:2px;background:#2a2a2a"></div>
<!-- track area bg -->
<div class="a" style="left:337px;top:564px;width:1px;height:189px;background:#1d1d1d"></div>
<!-- clips -->
<div class="a" style="left:338px;top:582px;width:121px;height:18px;background:#e8e8e8"></div>
<div class="a" style="left:341px;top:585px;width:115px;height:12px;background:#e57ee5"></div>
<div class="a" style="left:338px;top:600px;width:121px;height:56px;background:#e57ee5"></div>
<div class="a" style="left:338px;top:618px;width:121px;height:1px;background:#8a3a8a"></div>
<div class="a" style="left:338px;top:637px;width:121px;height:1px;background:#8a3a8a"></div>
<svg style="left:346px;top:585px" width="8" height="8"><rect width="7" height="7" fill="#8d7ac8"/></svg>
<svg style="left:346px;top:603px" width="8" height="8"><rect width="7" height="7" fill="#8d7ac8"/></svg>
<svg style="left:346px;top:622px" width="8" height="8"><rect width="7" height="7" fill="#8d7ac8"/></svg>
<svg style="left:346px;top:640px" width="8" height="8"><rect width="7" height="7" fill="#4a5a4a"/></svg>
<div class="t" style="left:360px;top:582px;color:#5a1f6e;font-size:8px;-webkit-text-stroke:0.3px #5a1f6e">新規テキストレイヤー</div>
<div class="t" style="left:360px;top:601px;color:#5a1f6e;font-size:8px;-webkit-text-stroke:0.3px #5a1f6e">グラフィック</div>
<div class="t" style="left:360px;top:619px;color:#5a1f6e;font-size:8px;-webkit-text-stroke:0.3px #5a1f6e">グラフィック</div>
<div class="t" style="left:360px;top:638px;color:#5a1f6e;font-size:8px;-webkit-text-stroke:0.3px #5a1f6e">カラーマット</div>
<!-- playhead -->
<div class="a" style="left:407px;top:560px;width:1px;height:193px;background:#4a7ccc"></div>
<svg style="left:403px;top:553px" width="9" height="10"><path d="M0 0.5 H9 V6 L4.5 9 L0 6Z" fill="#3b8fe8"/></svg>
<!-- vertical scrollbar -->
<div class="a" style="left:795px;top:575px;width:6px;height:76px;background:#2e2e2e"></div>
<div class="a" style="left:795px;top:662px;width:6px;height:86px;background:#2e2e2e"></div>
<svg style="left:792px;top:566px" width="12" height="190"><g fill="#232323" stroke="#b8b8b8" stroke-width="1.5"><circle cx="6" cy="5" r="3.2"/><circle cx="6" cy="85" r="3.2"/><circle cx="6" cy="98" r="3.2"/><circle cx="6" cy="179" r="3.2"/></g></svg>
<!-- METERS -->
<div class="a" style="left:814px;top:510px;width:37px;height:243px;background:#232323"></div>
<div class="a" style="left:824px;top:529px;width:17px;height:214px;background:#1c1c1c;box-sizing:border-box;border:1px solid #0e0e0e"></div>
<div class="a" style="left:825px;top:537px;width:15px;height:1px;background:#0e0e0e"></div>
<div class="a" style="left:832px;top:530px;width:1px;height:7px;background:#0e0e0e"></div>
<div class="a" style="left:826px;top:741px;width:6px;height:1px;background:#b8c020"></div>
<div class="a" style="left:833px;top:741px;width:6px;height:1px;background:#b8c020"></div>
<div class="t n" style="left:826px;top:746px;color:#a0a0a0;font-size:7px">S S</div>
<div class="a" style="left:164px;top:750px;width:648px;height:3px;background:#1e1e1e"></div>
<svg style="left:0;top:740px" width="1024" height="13"><g fill="#2a2a2a" stroke="#a8a8a8" stroke-width="1.5"><circle cx="176" cy="13.5" r="3.3"/><circle cx="453" cy="13.5" r="3.3"/></g></svg>
<!-- RIGHT PANEL -->
<div class="a" style="left:853px;top:23px;width:171px;height:730px;background:#232323"></div>
<div class="t" style="left:862px;top:33px;color:#d0d0d0;-webkit-text-stroke:0.35px #d0d0d0">エッセンシャルグラフィックス</div>
<svg style="left:972px;top:35px" width="8" height="7"><path d="M0 0.6H7.5M0 3.1H7.5M0 5.6H7.5" stroke="#a8a8a8" stroke-width="1.1"/></svg>
<div class="t" style="left:864px;top:62px;color:#8c8c8c;font-size:8px">参照</div>
<div class="t" style="left:896px;top:62px;color:#d0d0d0;font-size:8px">編集</div>
<div class="a" style="left:896px;top:75px;width:17px;height:2px;background:#c8c8c8"></div>
<div class="a" style="left:856px;top:83px;width:168px;height:14px;background:#3e3e3e"></div>
<svg style="left:862px;top:87.5px" width="11" height="8"><path d="M0.5 4 Q5.5 -2 10.5 4 Q5.5 10 0.5 4Z" fill="#d8d8d8"/><circle cx="5.5" cy="4" r="1.6" fill="#3e3e3e"/></svg>
<div class="t n" style="left:894px;top:84px;color:#d0d0d0;font-family:'Liberation Serif',serif;font-size:14.5px;font-weight:bold;height:14px;line-height:14px">T</div>
<div class="t" style="left:913px;top:86px;color:#c8c8c8">新規テキストレイヤー</div>
<div class="a" style="left:856px;top:97px;width:168px;height:19px;background:#1d1d1d"></div>
<div class="a" style="left:853px;top:116px;width:3px;height:637px;background:#1c1c1c"></div>
<svg style="left:997px;top:117px" width="27" height="11"><path d="M1 2 H5 L6 3.5 H11 V10 H1Z" fill="#d0d0d0"/><rect x="17" y="2" width="10" height="7" fill="#d0d0d0"/><rect x="19" y="5" width="3" height="5" fill="#232323"/></svg>
<!-- responsive -->
<div class="t" style="left:859px;top:135px;color:#a8a8a8">レスポンシブデザイン ー 位置</div>
<div class="t" style="left:866px;top:157px;color:#9c9c9c">追従：</div>
<div class="a" style="left:894px;top:155px;width:92px;height:13px;background:#1c1c1c"></div>
<div class="t" style="left:898px;top:157px;color:#d0d0d0">ビデオフレーム</div>
<svg style="left:975px;top:159px" width="7" height="5"><path d="M0.5 0.5 L3.5 3.5 L6.5 0.5" fill="none" stroke="#bbb" stroke-width="1.2"/></svg>
<div class="a" style="left:996px;top:144px;width:28px;height:39px;background:#1f1f1f"></div>
<svg style="left:996px;top:144px" width="28" height="39"><g fill="none" stroke="#8a8a8a" stroke-width="1.1"><rect x="11.5" y="12.5" width="10" height="10" rx="2"/><path d="M11 3.5 H21 M16 3.5 V8 M3.5 14 V22 M3.5 18 H8 M11 31.5 H21 M16 31.5 V27"/></g></svg>
<div class="a" style="left:856px;top:186px;width:168px;height:2px;background:#131313"></div>
<!-- align & transform -->
<div class="t" style="left:859px;top:197px;color:#a8a8a8">整列と変形</div>
<svg style="left:0;top:0" width="1024" height="300">
<g fill="none" stroke="#c8c8c8" stroke-width="1.1">
<rect x="868.5" y="218.5" width="13" height="9"/><rect x="872" y="221" width="6" height="4"/><path d="M868.5 223 H872 M878 223 H881.5"/>
<rect x="886.5" y="218.5" width="13" height="9"/><rect x="890.5" y="220.5" width="5" height="5"/><path d="M893 218.5 V220.5 M893 225.5 V227.5"/>
</g>
<g fill="#c8c8c8">
<rect x="915" y="217" width="13" height="1.5"/><rect x="916" y="218" width="4" height="10"/><rect x="922" y="218" width="4" height="6"/>
<rect x="933" y="222.5" width="13" height="1.3"/><rect x="934" y="218" width="4" height="10"/><rect x="940" y="219.5" width="4" height="6"/>
<rect x="951" y="228" width="13" height="1.5"/><rect x="952" y="218" width="4" height="10"/><rect x="958" y="222" width="4" height="6"/>
</g>
<g fill="#5a5a5a"><rect x="970" y="218" width="12" height="3" rx="1.5"/><rect x="970" y="225" width="12" height="3" rx="1.5"/></g>
<g fill="#c8c8c8"><rect x="997" y="216" width="1.5" height="14"/><rect x="999" y="218" width="6" height="4"/><rect x="999" y="224" width="10" height="4"/>
<rect x="1018" y="216" width="1.5" height="14"/><rect x="1014" y="218" width="10" height="4"/><rect x="1015" y="224" width="9" height="4"/></g>
<!-- move icon -->
<g stroke="#c8c8c8" stroke-width="1.2" fill="#c8c8c8"><path d="M870 246 H880 M875 241 V251"/><path d="M875 239.5 L873 242 H877Z M875 252.5 L873 250 H877Z M868.5 246 L871 244 V248Z M881.5 246 L879 244 V248Z" stroke="none"/></g>
<!-- anchor -->
<g stroke="#c8c8c8" stroke-width="1.1" fill="none"><path d="M989 251 L1001 240"/><rect x="993" y="243.5" width="4" height="4" fill="#888"/><circle cx="989" cy="251" r="1.3" fill="#c8c8c8"/><circle cx="1001" cy="240" r="1.3" fill="#c8c8c8"/></g>
<!-- scale icon -->
<g fill="none" stroke="#c8c8c8" stroke-width="1.1"><rect x="869.5" y="264.5" width="6" height="6"/><rect x="873.5" y="261.5" width="6" height="6"/><path d="M874 266 L878 262.5"/></g>
<!-- rotate -->
<g fill="none" stroke="#b0b0b0" stroke-width="1.3"><path d="M995.10 263.92 A4.6 4.6 0 1 1 991.33 266.56"/></g><path d="M988.6 265.2 L992.8 263 L992.6 267.6Z" fill="#b0b0b0"/>
<!-- checker -->
<g fill="#d0d0d0">
<rect x="869" y="285" width="2" height="2"/><rect x="873" y="285" width="2" height="2"/><rect x="877" y="285" width="2" height="2"/>
<rect x="871" y="287" width="2" height="2"/><rect x="875" y="287" width="2" height="2"/><rect x="879" y="287" width="2" height="2"/>
<rect x="869" y="289" width="2" height="2"/><rect x="873" y="289" width="2" height="2"/><rect x="877" y="289" width="2" height="2"/>
<rect x="871" y="291" width="2" height="2"/><rect x="875" y="291" width="2" height="2"/><rect x="879" y="291" width="2" height="2"/>
<rect x="869" y="293" width="2" height="2"/><rect x="873" y="293" width="2" height="2"/><rect x="877" y="293" width="2" height="2"/>
</g>
<path d="M927 290 H1019" stroke="#4a4a4a" stroke-width="1.2"/>
<circle cx="1023" cy="290" r="3.5" fill="#232323" stroke="#c8c8c8" stroke-width="1.5"/>
</svg>
<div class="t bl n" style="left:889px;top:241px;font-size:8px">257.0 ,</div>
<div class="t bl n" style="left:925px;top:241px;font-size:8px">275.0</div>
<div class="t bl n" style="left:1007px;top:241px;font-size:8px">0.0 ,</div>
<div class="t bl n" style="left:889px;top:263px;font-size:8px">38</div>
<div class="a" style="left:916px;top:261px;width:10px;height:14px;background:#10151c"></div>
<svg style="left:918px;top:262.5px" width="6" height="11"><g fill="none" stroke="#3b8fe8" stroke-width="1.2"><rect x="0.8" y="0.6" width="4.2" height="5" rx="2"/><rect x="0.8" y="5.2" width="4.2" height="5" rx="2"/></g></svg>
<div class="t n" style="left:930px;top:263px;font-size:8px;color:#4a4a4a">38</div>
<div class="t n" style="left:956px;top:263px;font-size:8px;color:#a0a0a0">%</div>
<div class="t bl n" style="left:1006px;top:263px;font-size:8px">0</div>
<div class="t bl n" style="left:889px;top:285px;font-size:8px">100.0 %</div>
<div class="a" style="left:856px;top:303px;width:168px;height:2px;background:#131313"></div>
<!-- master style -->
<div class="t" style="left:859px;top:314px;color:#a8a8a8">マスタースタイル</div>
<div class="a" style="left:868px;top:334px;width:134px;height:13px;background:#1c1c1c;box-sizing:border-box;border:1px solid #2a2a2a"></div>
<div class="t" style="left:873px;top:336px;color:#d0d0d0">なし</div>
<svg style="left:990px;top:338px" width="7" height="5"><path d="M0.5 0.5 L3.5 3.5 L6.5 0.5" fill="none" stroke="#bbb" stroke-width="1.2"/></svg>
<svg style="left:1010px;top:334px" width="10" height="12"><path d="M5 1 V8 M2 5 L5 9 L8 5 M1 11 H9" fill="none" stroke="#4a4a4a" stroke-width="1.5"/></svg>
<div class="a" style="left:856px;top:355px;width:168px;height:2px;background:#131313"></div>
<!-- text -->
<div class="t" style="left:859px;top:366px;color:#a8a8a8">テキスト</div>
<div class="a" style="left:865px;top:385px;width:150px;height:12px;background:#1b1b1b"></div>
<div class="t n" style="left:869px;top:386px;color:#d8d8d8;font-size:8px;-webkit-text-stroke:0.3px #d8d8d8">Kozuka Mincho Pro</div>
<div class="a" style="left:1016px;top:385px;width:8px;height:12px;background:#1b1b1b"></div>
<svg style="left:1018px;top:389px" width="7" height="5"><path d="M0.5 0.5 L3.5 3.5 L6.5 0.5" fill="none" stroke="#bbb" stroke-width="1.2"/></svg>
<div class="a" style="left:864px;top:406px;width:67px;height:13px;background:#1c1c1c;box-sizing:border-box;border:1px solid #2a2a2a"></div>
<div class="t n" style="left:869px;top:408px;color:#d0d0d0;font-size:8px">R</div>
<svg style="left:921px;top:411px" width="7" height="5"><path d="M0.5 0.5 L3.5 3.5 L6.5 0.5" fill="none" stroke="#bbb" stroke-width="1.2"/></svg>
<div class="t bl n" style="left:947px;top:408px;font-size:8px">100</div>
<svg style="left:966px;top:406px" width="58" height="14"><path d="M3 7 H13 M21 7 H58" stroke="#4a4a4a" stroke-width="1.2"/><circle cx="17" cy="7" r="3.4" fill="#232323" stroke="#c8c8c8" stroke-width="1.6"/></svg>
<svg style="left:0;top:0" width="1024" height="520">
<g stroke-width="1.6">
<g stroke="#3b8fe8"><path d="M865 431 H876 M865 433.5 H873 M865 436 H876 M865 438.5 H873"/></g>
<g stroke="#c8c8c8"><path d="M885 431 H897 M887 433.5 H895 M885 436 H897 M887 438.5 H895"/>
<path d="M905 431 H917 M909 433.5 H917 M905 436 H917 M909 438.5 H917"/></g>
<g stroke="#464646"><path d="M933 431 H944 M933 433.5 H944 M933 436 H944 M933 438.5 H944"/>
<path d="M953 431 H964 M953 433.5 H964 M953 436 H964 M953 438.5 H964"/>
<path d="M976 431 H987 M976 433.5 H987 M976 436 H987 M976 438.5 H987"/>
<path d="M997 431 H1008 M997 433.5 H1008 M997 436 H1008 M997 438.5 H1008"/></g>
</g>
</svg>
<div class="a" style="left:864px;top:450px;width:13px;height:9px;background:#d0d0d0"></div>
<div class="t n" style="left:865px;top:450px;color:#222;font-size:8px;font-weight:bold;letter-spacing:-1px">VA</div>
<svg style="left:864px;top:460px" width="14" height="4"><path d="M0 2 H14 M0 2 L2 0 M0 2 L2 4 M14 2 L12 0 M14 2 L12 4" stroke="#d0d0d0" stroke-width="1"/></svg>
<div class="t bl n" style="left:881px;top:453px;font-size:8px;font-weight:bold">0</div>
<div class="t n" style="left:914px;top:450px;color:#c8c8c8;font-size:9px;letter-spacing:-2px">V/A</div>
<svg style="left:918px;top:460px" width="8" height="4"><path d="M1 2 H8 M1 2 L3 0 M1 2 L3 4" stroke="#c8c8c8" stroke-width="1"/></svg>
<div class="t n" style="left:932px;top:453px;font-size:8px;color:#4a4a4a">0</div>
<svg style="left:964px;top:449px" width="14" height="15"><g fill="none" stroke="#c8c8c8" stroke-width="1"><path d="M8 1 L5 6 H11Z M8 8 L5 13 H11Z M2 3 V12 M1 4 L2 3 L3 4 M1 11 L2 12 L3 11"/></g></svg>
<div class="t bl n" style="left:981px;top:453px;font-size:8px;font-weight:bold">0</div>
<svg style="left:1014px;top:450px" width="10" height="12"><path d="M5 1 L1 9 H9Z" fill="none" stroke="#c8c8c8" stroke-width="1.2"/></svg>
<svg style="left:864px;top:472px" width="14" height="15"><g fill="none" stroke="#c8c8c8" stroke-width="1"><path d="M2 1 V9 M12 1 V9"/><path d="M4 3 H10 M5 6 H9"/><path d="M1 12 H13 M1 12 L3 10.5 M1 12 L3 13.5 M13 12 L11 10.5 M13 12 L11 13.5"/></g></svg>
<div class="t bl n" style="left:881px;top:475px;font-size:8px;font-weight:bold">0</div>
<div class="t n" style="left:917px;top:473px;color:#d0d0d0;font-family:'Liberation Serif',serif;font-size:12px;font-weight:bold;height:12px;line-height:12px">T</div>
<div class="t n" style="left:935px;top:473px;color:#d0d0d0;font-family:'Liberation Serif',serif;font-size:12px;font-style:italic;height:12px;line-height:12px">T</div>
<div class="t n" style="left:951px;top:473px;color:#d0d0d0;font-family:'Liberation Serif',serif;font-size:12px;height:12px;line-height:12px;letter-spacing:-1px">TT</div>
<div class="t" style="left:971px;top:473px;color:#d0d0d0;font-family:'Liberation Serif',serif;font-size:12px;height:12px;line-height:12px">T<span style="font-size:9px">T</span></div>
<div class="t" style="left:993px;top:473px;color:#d0d0d0;font-family:'Liberation Serif',serif;font-size:12px;height:12px;line-height:12px">T<sup style="font-size:6px">1</sup></div>
<div class="t" style="left:1012px;top:473px;color:#d0d0d0;font-family:'Liberation Serif',serif;font-size:12px;height:12px;line-height:12px">T<sub style="font-size:6px">1</sub></div>
<div class="a" style="left:856px;top:493px;width:168px;height:2px;background:#131313"></div>
<!-- appearance -->
<div class="t" style="left:859px;top:505px;color:#a8a8a8">アピアランス</div>
<svg style="left:1015px;top:503px" width="12" height="12"><path d="M10.5 11 L5.5 6" stroke="#d0d0d0" stroke-width="2.4"/><circle cx="4" cy="4.2" r="3.1" fill="#d0d0d0"/><path d="M3.8 3.8 L0.5 0.5" stroke="#232323" stroke-width="2.2"/></svg>
<div class="a" style="left:864px;top:527px;width:10px;height:10px;background:#7a7a7a"></div>
<svg style="left:864px;top:527px" width="10" height="10"><path d="M2 5 L4.2 7.3 L8.3 2.5" fill="none" stroke="#222" stroke-width="1.5"/></svg>
<div class="a" style="left:864px;top:548px;width:10px;height:10px;box-sizing:border-box;border:1.5px solid #8a8a8a"></div>
<div class="a" style="left:864px;top:570px;width:10px;height:10px;box-sizing:border-box;border:1.5px solid #8a8a8a"></div>
<div class="a" style="left:864px;top:591px;width:10px;height:10px;box-sizing:border-box;border:1.5px solid #8a8a8a"></div>
<div class="a" style="left:864px;top:613px;width:10px;height:10px;box-sizing:border-box;border:1.5px solid #8a8a8a"></div>
<div class="a" style="left:884px;top:525px;width:30px;height:15px;background:#fff"></div>
<div class="a" style="left:884px;top:547px;width:30px;height:15px;background:#fff"></div>
<div class="a" style="left:884px;top:569px;width:30px;height:15px;background:#4e4e4e"></div>
<div class="a" style="left:884px;top:590px;width:30px;height:15px;background:#4e4e4e"></div>
<div class="t" style="left:918px;top:528px;color:#c8c8c8;font-size:8px">塗り</div>
<div class="t" style="left:918px;top:549px;color:#4e4e4e;font-size:8px">ストローク</div>
<svg style="left:953px;top:548px" width="10" height="10"><path d="M5 0.5 V9.5 M0.5 5 H9.5" stroke="#e8e8e8" stroke-width="2.2"/></svg>
<div class="t n" style="left:999px;top:550px;color:#4e4e4e;font-size:8px">1.0</div>
<div class="t" style="left:918px;top:571px;color:#4e4e4e;font-size:8px">背景</div>
<div class="t" style="left:918px;top:592px;color:#4e4e4e;font-size:8px">シャドウ</div>
<div class="t" style="left:877px;top:614px;color:#b0b0b0">テキストでマスク</div>
<svg style="left:0;top:0" width="1024" height="620"><g fill="none" stroke="#b0b0b0" stroke-width="1.2"><path d="M1020 538 Q1018.5 534 1024 531 M1020 538 Q1023 536.5 1025 534"/><path d="M1020 559 Q1018.5 555 1024 552 M1020 559 Q1023 557.5 1025 555"/><path d="M1020 580.5 Q1018.5 576.5 1024 573.5 M1020 580.5 Q1023 579.0 1025 576.5"/><path d="M1020 601 Q1018.5 597 1024 594 M1020 601 Q1023 599.5 1025 597"/></g></svg>
<div class="a" style="left:856px;top:642px;width:168px;height:2px;background:#131313"></div>

</body></html>
